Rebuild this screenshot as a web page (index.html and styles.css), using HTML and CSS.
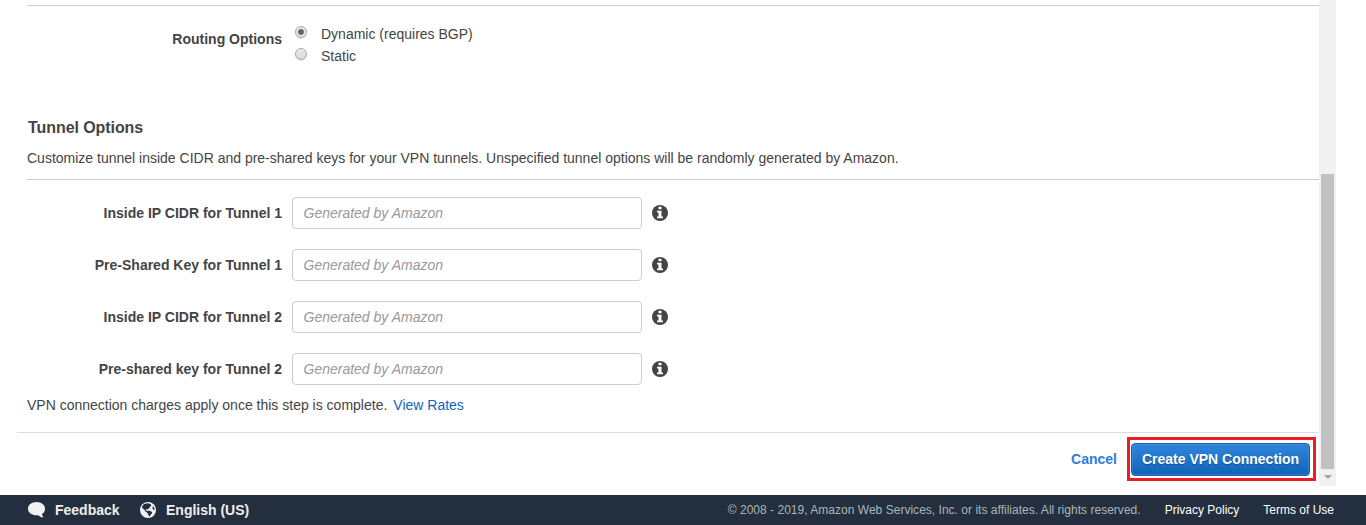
FILE: index.html
```html
<!DOCTYPE html>
<html lang="en">
<head>
<meta charset="utf-8">
<title>Create VPN Connection</title>
<link rel="stylesheet" href="styles.css">
</head>
<body>
<svg class="defs" width="0" height="0" aria-hidden="true">
  <symbol id="info" viewBox="0 0 16 16">
    <circle cx="8" cy="8" r="8" fill="#444"/>
    <path fill="#fff" d="M6.500 1.700h3v2.600h-3zM5 5.700h4.500v5.800H11v1.800H5v-1.800h1.500V7.500H5z"/>
  </symbol>
</svg>
<div class="viewport">
  <main class="content">
    <section class="routing">
      <div class="routing-label">Routing Options</div>
      <div class="radios">
        <label class="radio"><span class="dot dot-on"></span><span>Dynamic (requires BGP)</span></label>
        <label class="radio"><span class="dot"></span><span>Static</span></label>
      </div>
    </section>
    <section class="tunnel">
      <h2 class="heading">Tunnel Options</h2>
      <p class="description">Customize tunnel inside CIDR and pre-shared keys for your VPN tunnels. Unspecified tunnel options will be randomly generated by Amazon.</p>
    </section>
    <section class="fields">
      <div class="field"><span class="field-label">Inside IP CIDR for Tunnel 1</span><input class="input" placeholder="Generated by Amazon"><svg class="info"><use href="#info"/></svg></div>
      <div class="field"><span class="field-label">Pre-Shared Key for Tunnel 1</span><input class="input" placeholder="Generated by Amazon"><svg class="info"><use href="#info"/></svg></div>
      <div class="field"><span class="field-label">Inside IP CIDR for Tunnel 2</span><input class="input" placeholder="Generated by Amazon"><svg class="info"><use href="#info"/></svg></div>
      <div class="field"><span class="field-label">Pre-shared key for Tunnel 2</span><input class="input" placeholder="Generated by Amazon"><svg class="info"><use href="#info"/></svg></div>
    </section>
    <p class="charges"><span>VPN connection charges apply once this step is complete.</span><a class="rates">View Rates</a></p>
    <div class="actions">
      <a class="cancel">Cancel</a>
      <div class="create-wrap"><button class="create">Create VPN Connection</button><div class="highlight"></div></div>
    </div>
  </main>
  <div class="scrollbar"><div class="thumb"></div><svg class="arrow" viewBox="0 0 8 4"><path d="M0 0h8L4 4z" fill="#a3a3a3"/></svg></div>
</div>
<footer class="footer">
  <svg class="bubble" viewBox="0 0 17 16"><path fill="#f2f2f2" d="M8.500 0C13.200 0 17 2.800 17 6.700c0 2.400-1.200 4.200-3.100 5.400.1 1.300.8 2.300 1.800 3.200-2.200.2-4.200-.7-5.400-2.100-.6.100-1.200.1-1.800.1C3.800 13.300 0 10.600 0 6.700S3.800 0 8.500 0z"/></svg>
  <span class="feedback">Feedback</span>
  <svg class="globe" viewBox="0 0 16 16"><circle cx="8" cy="8" r="8" fill="#f2f2f2"/><path fill="#232f3e" d="M4 2 7.500 1.300l3 .7 1 1.700-1.400.3.300 1.300-1.800.9-.7 1.500-1.400-.6-.7.9 1 .9 1.100.2 2-.4 2 1.200.3 1.400-1.300 1.200-.8 1.300-1 .7-.9-1.900-.7-1.600-2-1.500-1.200-2L2 6.100l.5-2.300zM13 4l1.300 2 .3 2-1.300-.2-.9-1.500z"/></svg>
  <span class="language">English (US)</span>
  <span class="copyright">© 2008 - 2019, Amazon Web Services, Inc. or its affiliates. All rights reserved.</span>
  <a class="privacy">Privacy Policy</a>
  <a class="terms">Terms of Use</a>
</footer>
</body>
</html>
```
FILE: styles.css
```css
* { box-sizing: border-box; }
body {
  margin: 0;
  height: 525px;
  display: flex;
  flex-direction: column;
  justify-content: space-between;
  overflow: hidden;
  background: #fff;
  color: #444;
  font: 14px/20px "Liberation Sans", Arial, sans-serif;
  white-space: nowrap;
}
.defs { display: none; }
p, h2 { margin: 0; }
.viewport { display: flex; height: 486px; }
.content { width: 1319px; padding-top: 5px; display: flex; flex-direction: column; }
.routing {
  height: 112px;
  margin-left: 27px;
  border-top: 1px solid #ccc;
  display: flex;
  gap: 13px;
}
.routing-label { width: 255px; padding-top: 23px; text-align: right; font-weight: bold; }
.radios { padding-top: 17px; }
.radio { display: flex; height: 22px; line-height: 22px; gap: 14px; }
.dot {
  width: 12px;
  height: 12px;
  margin-top: 3px;
  border: 1px solid #a8a8a8;
  border-radius: 50%;
  background: linear-gradient(#e9e9e9, #dadada);
  box-shadow: 0 1px 1px #e4e4e4;
}
.dot-on { background: radial-gradient(circle, #606060 0 2.4px, #e4e4e4 3.3px); }
.tunnel { height: 63px; margin-left: 27px; border-bottom: 1px solid #ccc; }
.heading { font-size: 16px; line-height: 20px; padding: 1px 0 0 1px; letter-spacing: -0.07px; }
.description { padding-top: 10px; }
.fields { padding: 17px 0 0 27px; display: flex; flex-direction: column; gap: 20px; }
.field { display: flex; align-items: center; height: 32px; }
.field-label { width: 255px; text-align: right; font-weight: bold; }
.input {
  width: 350px;
  height: 32px;
  margin: 0 10px;
  padding: 0 10.5px;
  border: 1px solid #ccc;
  border-radius: 4px;
  background: #fff;
  font: italic 14px/20px "Liberation Sans", Arial, sans-serif;
}
.input::placeholder { color: #999; opacity: 1; }
.info { width: 16px; height: 16px; }
.charges { padding: 10px 0 0 27px; height: 47px; display: flex; gap: 6px; }
.rates { color: #1166bb; }
.actions {
  margin-left: 17px;
  height: 54px;
  border-top: 1px solid #ddd;
  padding: 10px 9px 0 0;
  display: flex;
  justify-content: flex-end;
  gap: 14px;
  font-weight: bold;
}
.cancel { line-height: 32px; color: #2e7de1; }
.create-wrap { position: relative; width: 179px; height: 33px; }
.create {
  width: 179px;
  height: 33px;
  padding: 0 0 2px;
  border: 1px solid #1c5fa8;
  border-radius: 4px;
  background: linear-gradient(#2f86dd, #1163b8);
  box-shadow: inset 0 0 0 1px rgba(90, 160, 230, .35);
  color: #fff;
  font: bold 14px/20px "Liberation Sans", Arial, sans-serif;
  text-shadow: 0 1px 1px rgba(0, 0, 0, .3);
}
.highlight { position: absolute; left: -4px; top: -6px; width: 189px; height: 44px; border: 3px solid #ed1c24; }
.scrollbar { width: 17px; height: 486px; background: #f1f1f1; padding-top: 174px; display: flex; flex-direction: column; align-items: center; gap: 6px; }
.thumb { width: 13px; height: 295px; background: #c1c1c1; }
.arrow { width: 8px; height: 4px; }
.footer { height: 30px; background: #232f3e; display: flex; align-items: center; padding: 0 32px 0 28px; color: #eee; font-weight: bold; }
.bubble { width: 17px; height: 16px; margin-right: 10px; }
.feedback { width: 85px; }
.globe { width: 16px; height: 16px; margin-right: 10px; }
.copyright { margin-left: auto; color: #aab7b8; letter-spacing: 0.02px; }
.copyright, .privacy, .terms { font-size: 12px; font-weight: normal; }
.privacy, .terms { margin-left: 24px; color: #fff; }
```
